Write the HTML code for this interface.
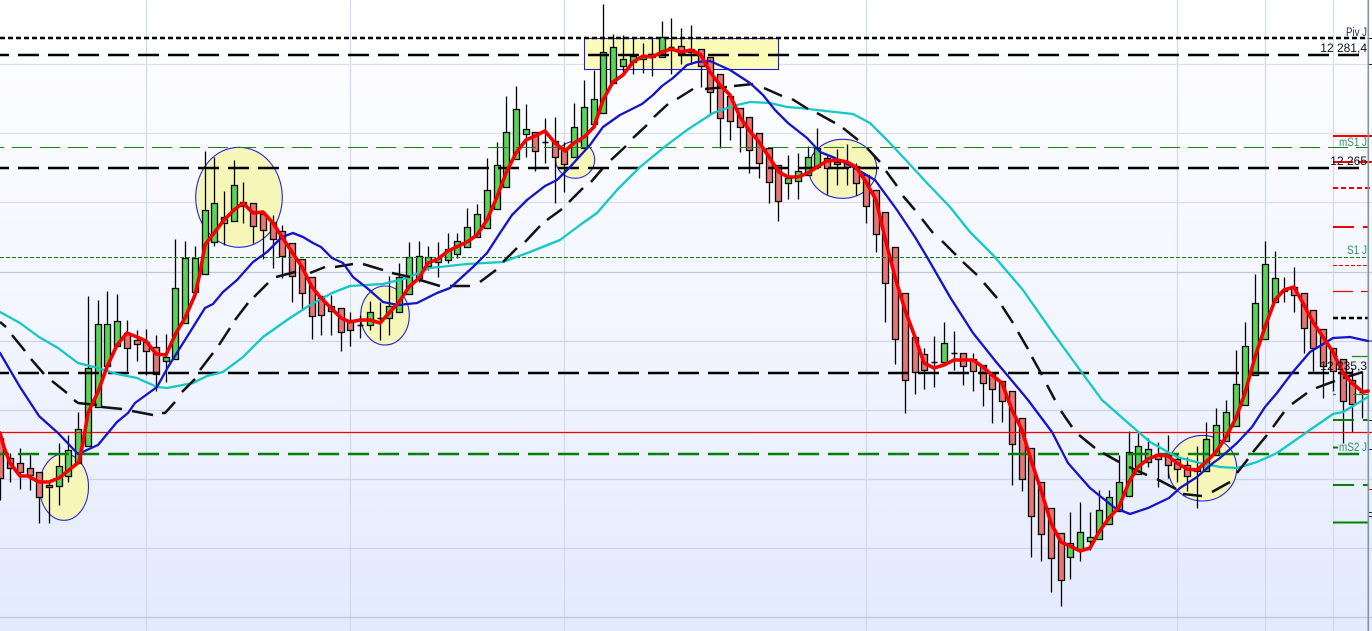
<!DOCTYPE html>
<html><head><meta charset="utf-8"><title>Chart</title>
<style>html,body{margin:0;padding:0;width:1372px;height:631px;overflow:hidden;background:#fff}svg{display:block}text{font-family:"Liberation Sans",Arial,sans-serif}</style>
</head><body>
<svg width="1372" height="631" viewBox="0 0 1372 631" xmlns="http://www.w3.org/2000/svg">
<defs><linearGradient id="bg" x1="0" y1="0" x2="0" y2="1"><stop offset="0" stop-color="#ffffff"/><stop offset=".15" stop-color="#fbfcff"/><stop offset=".5" stop-color="#f3f6ff"/><stop offset="1" stop-color="#e3eafe"/></linearGradient></defs>
<rect width="1372" height="631" fill="url(#bg)"/>
<path d="M146.5 0V631M350.5 0V631M564.5 0V631M866.5 0V631M1177.5 0V631M1265.5 0V631M1333.5 0V631" stroke="#d2d9eb" stroke-width="1.2" fill="none"/>
<path d="M0 64.5H1372M0 133.5H1372M0 202.5H1372" stroke="#dcdfec" stroke-width="1.2" fill="none"/>
<path d="M0 341.5H1372M0 410.5H1372M0 479.5H1372M0 548.5H1372" stroke="#cfd4e6" stroke-width="1.2" fill="none"/>
<path d="M0 272.5H1372M0 617.5H1372" stroke="#c0c6dc" stroke-width="1.2" fill="none"/>
<g fill="#f6f6b8" stroke="#2424dc" stroke-width="1.1">
<ellipse cx="64" cy="487" rx="24.5" ry="33.3"/>
<ellipse cx="239" cy="197.3" rx="43.3" ry="50"/>
<ellipse cx="385" cy="315.5" rx="24.3" ry="29.5"/>
<ellipse cx="575.2" cy="159.8" rx="19.5" ry="18.5"/>
<ellipse cx="842.7" cy="168.8" rx="34" ry="29.5"/>
<ellipse cx="1202.5" cy="468.2" rx="34.2" ry="32.8"/>
<rect x="584.5" y="38.5" width="194" height="31" fill="#fdfbb8" stroke="#1a1ae0"/>
</g>
<g transform="translate(.5,.5)">
<path fill="none" stroke="#000" stroke-width="1.3" d="M0 432V500M10 453V482M20 448V489M30 455V490M39 472V523M49 480V523M59 443V505M68 435V482M78 412V463M88 296V446M98 300V407M107 291V366M117 294V346M127 320V371M137 330V361M146 329V375M156 335V391M166 334V382M175 239V359M185 241V323M195 246V292M205 151V274M214 157V246M224 191V245M234 160V221M243 182V223M253 203V243M263 214V259M273 215V268M282 225V278M292 243V302M302 259V309M312 277V339M321 296V335M331 295V335M341 308V351M350 312V346M360 315V338M370 301V330M380 302V340M389 276V335M399 263V312M409 242V294M419 241V282M428 246V270M438 242V277M448 233V263M457 233V258M467 208V247M477 204V237M487 158V228M497 142V209M506 96V187M516 86V159M526 104V157M535 132V171M545 118V163M555 117V203M564 142V192M574 103V157M584 80V148M594 70V124M603 4V113M613 34V83M623 35V75M633 38V74M643 43V73M652 38V76M662 21V57M671 18V74M681 28V64M691 25V63M701 49V87M710 57V114M720 74V148M730 96V140M740 108V152M749 117V173M759 133V178M769 148V203M778 165V221M788 155V199M798 153V199M808 146V175M817 128V167M827 156V194M837 149V185M847 144V185M856 163V195M866 175V223M876 190V252M885 212V322M895 247V364M905 293V413M915 337V394M924 348V389M934 336V387M944 322V362M954 331V370M963 353V385M973 353V391M983 365V406M992 373V423M1002 381V422M1012 391V485M1022 418V491M1031 448V557M1041 482V561M1051 508V592M1061 533V606M1070 512V579M1080 502V561M1090 512V550M1099 490V539M1109 490V524M1119 455V511M1129 431V496M1138 433V474M1148 438V467M1158 442V487M1168 435V478M1177 453V482M1187 457V491M1197 446V508M1206 422V471M1216 408V455M1226 400V441M1236 350V426M1245 322V405M1255 274V375M1265 241V339M1275 251V302M1284 277V302M1294 267V312M1304 293V353M1313 310V371M1323 329V398M1333 348V391M1343 359V443M1352 368V432M1362 372V418"/>
<path fill="#56d556" stroke="#000" stroke-width="1.3" d="M56 466h6V486h-6zM65 450h6V476h-6zM75 429h6V463h-6zM85 368h6V446h-6zM95 324h6V407h-6zM104 324h6V366h-6zM114 321h6V346h-6zM163 357h6V361h-6zM172 288h6V359h-6zM182 258h6V323h-6zM192 258h6V292h-6zM202 210h6V274h-6zM211 203h6V242h-6zM221 217h6V223h-6zM231 185h6V221h-6zM367 312h6V325h-6zM386 306h6V318h-6zM396 277h6V312h-6zM406 257h6V294h-6zM416 256h6V278h-6zM425 257h6V266h-6zM435 258h6V262h-6zM445 249h6V260h-6zM454 241h6V254h-6zM464 227h6V247h-6zM474 214h6V237h-6zM484 190h6V228h-6zM494 165h6V209h-6zM503 132h6V187h-6zM513 109h6V159h-6zM523 129h6V134h-6zM571 127h6V157h-6zM581 107h6V148h-6zM591 99h6V124h-6zM600 52h6V113h-6zM610 47h6V83h-6zM620 59h6V66h-6zM630 56h6V62h-6zM640 57h6V59h-6zM649 56h6V57h-6zM659 37h6V57h-6zM785 178h6V183h-6zM795 171h6V181h-6zM805 157h6V175h-6zM814 148h6V167h-6zM941 343h6V362h-6zM1067 543h6V557h-6zM1077 532h6V549h-6zM1087 537h6V541h-6zM1096 510h6V539h-6zM1106 497h6V524h-6zM1116 482h6V511h-6zM1126 452h6V496h-6zM1135 446h6V474h-6zM1145 449h6V462h-6zM1194 468h6V471h-6zM1203 439h6V471h-6zM1213 425h6V455h-6zM1223 412h6V441h-6zM1233 384h6V426h-6zM1242 346h6V405h-6zM1252 303h6V375h-6zM1262 264h6V339h-6zM1272 278h6V302h-6zM1281 290h6V291h-6z"/>
<path fill="#e87474" stroke="#000" stroke-width="1.3" d="M-3 438h6V478h-6zM7 458h6V468h-6zM17 463h6V472h-6zM27 468h6V475h-6zM36 472h6V497h-6zM46 485h6V487h-6zM124 333h6V348h-6zM134 340h6V344h-6zM143 342h6V351h-6zM153 347h6V374h-6zM240 202h6V206h-6zM250 203h6V226h-6zM260 214h6V230h-6zM270 222h6V239h-6zM279 231h6V256h-6zM289 243h6V276h-6zM299 259h6V293h-6zM309 277h6V316h-6zM318 296h6V315h-6zM328 306h6V311h-6zM338 308h6V332h-6zM347 320h6V330h-6zM532 132h6V151h-6zM552 141h6V157h-6zM561 150h6V164h-6zM678 46h6V53h-6zM688 49h6V52h-6zM698 49h6V66h-6zM707 57h6V92h-6zM717 74h6V118h-6zM727 96h6V121h-6zM737 108h6V127h-6zM746 117h6V150h-6zM756 133h6V163h-6zM766 148h6V182h-6zM775 165h6V201h-6zM824 158h6V168h-6zM834 162h6V164h-6zM844 163h6V167h-6zM853 166h6V183h-6zM863 175h6V206h-6zM873 190h6V234h-6zM882 212h6V283h-6zM892 247h6V339h-6zM902 293h6V380h-6zM912 337h6V372h-6zM921 354h6V370h-6zM960 353h6V366h-6zM970 359h6V371h-6zM980 365h6V383h-6zM989 373h6V389h-6zM999 381h6V401h-6zM1009 391h6V444h-6zM1019 418h6V479h-6zM1028 448h6V516h-6zM1038 482h6V534h-6zM1048 508h6V558h-6zM1058 533h6V580h-6zM1155 454h6V459h-6zM1165 455h6V465h-6zM1174 459h6V469h-6zM1184 465h6V476h-6zM1291 287h6V295h-6zM1301 293h6V328h-6zM1310 310h6V348h-6zM1320 329h6V366h-6zM1330 348h6V371h-6zM1340 359h6V401h-6zM1349 380h6V404h-6z"/>
<path fill="none" stroke="#000" stroke-width="1.4" d="M357 325h6M377 318h6M542 142h6M668 47h6M931 362h6M951 353h6M1359 392h6"/>
</g>
<g fill="none">
<path d="M0 38H1366" stroke="#000" stroke-width="2.4" stroke-dasharray="5 3"/>
<path d="M0 55H1359M0 168H1359M0 373H1353" stroke="#000" stroke-width="2.4" stroke-dasharray="21 9" stroke-dashoffset="12"/>
<path d="M0 454H1359" stroke="#008000" stroke-width="2.4" stroke-dasharray="21 9" stroke-dashoffset="12"/>
<path d="M0 147.5H1368" stroke="#1f7f1f" stroke-width="1" stroke-dasharray="20 8" stroke-dashoffset="16"/>
<path d="M0 257.5H1368" stroke="#1a7a1a" stroke-width="1" stroke-dasharray="4 2"/>
<path d="M0 432.5H1372" stroke="#f40000" stroke-width="1.3"/>
<path d="M1333 136H1372" stroke="#f00000" stroke-width="2"/>
<path d="M1333 162H1353M1358 162H1372" stroke="#f00000" stroke-width="2"/>
<path d="M1333 188H1372" stroke="#f00000" stroke-width="2" stroke-dasharray="5 3"/>
<path d="M1333 227H1354M1363 227H1368" stroke="#f00000" stroke-width="2"/>
<path d="M1333 265.5H1368" stroke="#f00000" stroke-width="1" stroke-dasharray="4 2"/>
<path d="M1333 291.5H1353M1361 291.5H1368" stroke="#f00000" stroke-width="1.2"/>
<path d="M1333 318H1368" stroke="#000" stroke-width="2.4" stroke-dasharray="5 3"/>
<path d="M1352 356.5H1368M1333 356.5H1338" stroke="#1a8a1a" stroke-width="1.2"/>
<path d="M1333 394.5H1336M1353 394.5H1368" stroke="#1a8a1a" stroke-width="1.2"/>
<path d="M1333 420H1354M1363 420H1368" stroke="#008000" stroke-width="2"/>
<path d="M1333 447.5H1338" stroke="#008000" stroke-width="2"/>
<path d="M1333 485H1354M1363 485H1368" stroke="#008000" stroke-width="2"/>
<path d="M1333 522.5H1368" stroke="#008000" stroke-width="2"/>
<path d="M1369 38.5h3M1369 64.5h3M1369 341h3M1369 420.5h3M1369 512.5h3M1369 516.5h3" stroke="#222" stroke-width="1"/>
<path d="M1369 489.5h3" stroke="#e00" stroke-width="1"/>
<path d="M1369 449.5h3" stroke="#22c" stroke-width="1"/>
<path d="M1368.3 0V631" stroke="#7c95a8" stroke-width="1.6"/>
<path stroke-linejoin="round" stroke-linecap="round" stroke="#14c8c8" stroke-width="2.3" d="M0 312L20 323L39 337L58 348L78 363L98 368L117 374L137 378L157 387L167 388L193 383L207 376L223 372L243 357L263 337L287 320L310 305L332 293L350 286L383 284L407 278L430 268L467 264L503 262L530 252L560 240L580 225L597 213L617 190L640 167L667 145L687 130L713 113L733 106L750 102L770 103L787 107L800 108L817 110L853 114L870 123L887 140L903 157L927 183L950 207L970 232L993 255L1023 290L1053 333L1080 370L1102 400L1127 422L1150 442L1177 457L1200 463L1220 467L1237 468L1257 462L1277 453L1307 432L1333 414L1343 412L1368 397"/>
<path stroke="#111" stroke-width="2.5" stroke-linejoin="round" d="M0 322L6 327M12 335L25 351M31 359L44 374M52 381L67 393M74 400L78 403L97 405M102 407L122 409M132 411L153 415M162 413L165 413L175 402M182 392L195 379M200 370L213 353M219 345L230 328M235 320L248 303M254 297L268 283M276 277L295 272M310 273L325 267M335 267L353 264M363 264L383 270M392 273L410 277M420 280L440 286M450 286L470 286M480 282L496 270M503 262L517 248M525 242L540 226M547 220L562 209M569 202L583 188M591 182L603 168M611 160L626 146M633 138L647 125M654 117L668 104M677 99L693 89M705 89L727 87M734 86L753 84M764 88L782 96M792 99L808 109M817 113L835 123M843 128L858 140M867 148L880 162M886 171L897 186M903 196L915 210M922 219L933 233M942 241L956 255M963 262L977 275M984 283L997 298M1002 306L1013 323M1018 332L1028 349M1032 357L1042 375M1047 385L1055 400M1061 411L1072 427M1079 435L1095 448M1103 453L1119 462M1129 467L1147 475M1157 479L1176 489M1183 494L1202 496M1212 492L1230 482M1237 473L1248 459M1253 452L1267 435M1273 427L1284 412M1292 404L1307 393M1316 388L1335 381M1343 378L1363 372"/>
<path stroke-linejoin="round" stroke-linecap="round" stroke="#1414c8" stroke-width="2.3" d="M0 353L20 387L39 416L58 433L78 454L98 445L117 422L128 413L135 403L157 387L168 367L185 340L195 324L205 308L213 304L223 292L237 280L253 262L267 252L282 237L293 233L303 237L313 243L321 247L332 258L343 263L353 277L367 288L383 302L398 305L417 303L437 293L450 288L473 267L487 253L500 233L512 215L527 200L545 186L557 180L570 167L590 145L603 127L620 115L642 104L653 95L662 86L673 78L687 65L697 62L710 61L730 70L750 83L763 95L775 110L788 123L807 138L820 152L835 158L853 167L875 180L897 210L915 237L927 257L950 297L973 333L997 363L1013 382L1028 400L1052 432L1068 463L1090 488L1115 508L1130 514L1148 508L1169 498L1180 488L1197 477L1213 463L1220 458L1237 443L1252 427L1265 407L1277 393L1292 373L1310 352L1333 338L1350 337L1368 341"/>
<path stroke-linejoin="round" stroke-linecap="round" stroke="#f60000" stroke-width="3.6" d="M0 433L4 447L10 463L20 476L28 476L39 482L49 482L59 478L69 470L79 462L84 437L88 413L98 392L107 367L117 345L127 333L137 337L146 341L156 354L166 355L176 333L185 318L195 295L200 273L205 245L214 233L224 220L234 210L243 203L253 213L263 212L273 223L282 237L292 252L302 267L312 287L321 298L331 308L341 318L350 322L360 320L370 320L380 323L389 313L399 302L409 287L419 278L428 263L438 259L448 251L467 242L477 235L487 220L497 197L506 173L516 153L526 140L535 136L545 131L555 143L565 151L574 143L584 137L594 127L603 100L613 82L623 75L633 62L643 56L652 57L662 52L671 49L681 52L691 50L701 55L710 72L720 85L730 95L740 117L749 130L759 142L769 157L779 172L788 177L798 177L808 173L817 167L827 161L837 160L847 162L856 167L866 182L876 200L885 238L895 277L905 310L915 337L924 363L934 368L944 365L954 360L963 360L973 360L983 367L992 375L1002 383L1012 410L1022 430L1031 460L1041 490L1051 523L1061 542L1070 546L1080 551L1090 548L1099 532L1109 518L1119 507L1129 482L1138 467L1148 459L1158 455L1168 456L1177 463L1187 469L1197 470L1206 462L1216 452L1226 437L1236 418L1245 393L1255 357L1265 327L1275 300L1284 290L1294 287L1304 305L1313 322L1323 337L1333 352L1343 373L1352 383L1363 392L1368 391"/>
</g>
<g text-anchor="end">
<text x="1367" y="36" font-size="11.5" fill="#1c2c50" textLength="21" lengthAdjust="spacingAndGlyphs">Piv J</text>
<text x="1367" y="52" font-size="12" fill="#111">12 281,4</text>
<text x="1367" y="146" font-size="11.5" fill="#2f8f5f" textLength="28" lengthAdjust="spacingAndGlyphs">mS1 J</text>
<text x="1367" y="165" font-size="12" fill="#111">12 265</text>
<text x="1367" y="254" font-size="11.5" fill="#2f8f5f" textLength="20" lengthAdjust="spacingAndGlyphs">S1 J</text>
<text x="1367" y="370" font-size="12" fill="#111">12 235,3</text>
<text x="1367" y="451" font-size="11.5" fill="#2f8f5f" textLength="28" lengthAdjust="spacingAndGlyphs">mS2 J</text>
</g>
</svg>
</body></html>
